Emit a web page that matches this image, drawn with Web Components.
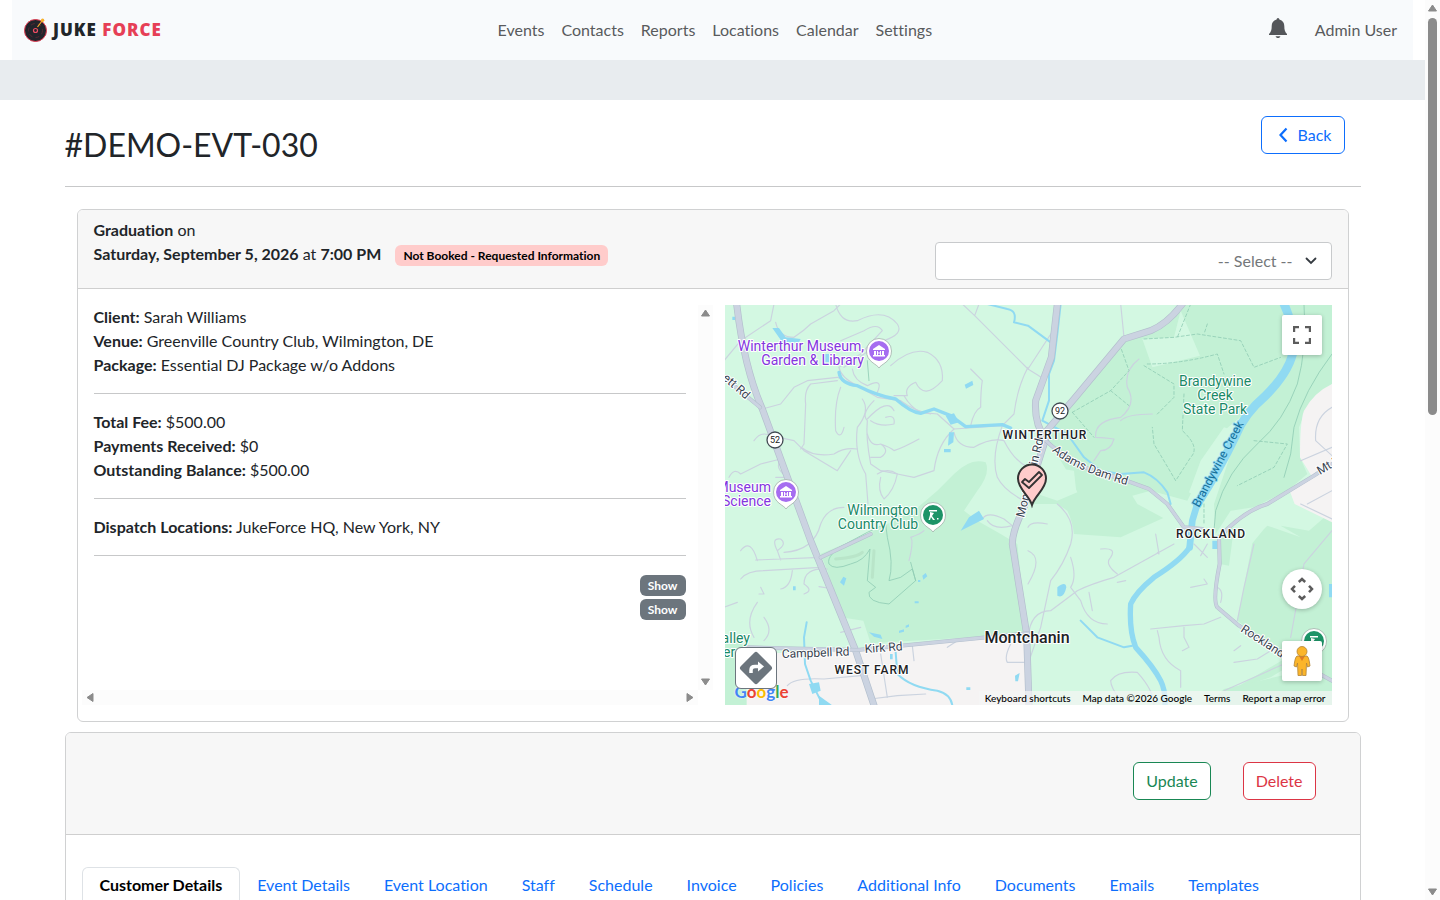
<!DOCTYPE html>
<html lang="en">
<head>
<meta charset="utf-8">
<meta name="viewport" content="width=device-width, initial-scale=1">
<title>#DEMO-EVT-030 - Juke Force</title>
<style>
html, body { margin: 0; height: 100%; overflow: hidden; }
body { font: 16px/24px Lato, sans-serif; font-variant-ligatures: none; color: #212529; background: #fff; }
hr { border: 0; border-top: 1px solid #c7c8c9; margin: 16px 0; }
b { font-weight: 700; }
</style>
</head>
<body>
<app-shell>
  <app-header>
    <nav-link href="#events">Events</nav-link>
    <nav-link href="#contacts">Contacts</nav-link>
    <nav-link href="#reports">Reports</nav-link>
    <nav-link href="#locations">Locations</nav-link>
    <nav-link href="#calendar">Calendar</nav-link>
    <nav-link href="#settings">Settings</nav-link>
    <nav-link slot="user" href="#account">Admin User</nav-link>
  </app-header>
  <page-container>
    <page-title>#DEMO-EVT-030
      <outline-button slot="action" tone="primary" icon="back">Back</outline-button>
    </page-title>
    <event-summary>
      <div slot="heading"><b>Graduation</b> on</div>
      <div slot="heading"><b>Saturday, September 5, 2026</b> at <b>7:00 PM</b> <status-badge tone="pink">Not Booked - Requested Information</status-badge></div>
      <div><b>Client:</b> Sarah Williams</div>
      <div><b>Venue:</b> Greenville Country Club, Wilmington, DE</div>
      <div><b>Package:</b> Essential DJ Package w/o Addons</div>
      <hr>
      <div><b>Total Fee:</b> $500.00</div>
      <div><b>Payments Received:</b> $0</div>
      <div><b>Outstanding Balance:</b> $500.00</div>
      <hr>
      <div><b>Dispatch Locations:</b> JukeForce HQ, New York, NY</div>
      <hr>
      <show-row>Show</show-row>
      <show-row>Show</show-row>
      <event-map slot="map"></event-map>
    </event-summary>
    <event-editor>
      <outline-button slot="actions" tone="success">Update</outline-button>
      <outline-button slot="actions" tone="danger">Delete</outline-button>
      <tab-link href="#customer" active>Customer Details</tab-link>
      <tab-link href="#event">Event Details</tab-link>
      <tab-link href="#location">Event Location</tab-link>
      <tab-link href="#staff">Staff</tab-link>
      <tab-link href="#schedule">Schedule</tab-link>
      <tab-link href="#invoice">Invoice</tab-link>
      <tab-link href="#policies">Policies</tab-link>
      <tab-link href="#additional">Additional Info</tab-link>
      <tab-link href="#documents">Documents</tab-link>
      <tab-link href="#emails">Emails</tab-link>
      <tab-link href="#templates">Templates</tab-link>
    </event-editor>
  </page-container>
</app-shell>

<script>
const define = (name, html) => customElements.define(name, class extends HTMLElement {
  constructor() {
    super();
    const markup = typeof html === 'function' ? html(this) : html;
    this.attachShadow({ mode: 'open' }).innerHTML = markup;
  }
});

/* Scroll track with end arrows; the thumb shows when the attribute is set. */
define('scroll-rail', el => {
  const across = el.hasAttribute('horizontal');
  const arrow = r => `<svg width="15" height="15" viewBox="0 0 15 15" aria-hidden="true"><path transform="rotate(${r} 7.5 7.5)" d="M7.5 5 L11.5 11 H3.5 Z" fill="#8b8b8b" stroke="#8b8b8b" stroke-linejoin="round"/></svg>`;
  return `<style>
    :host { display: flex; flex-direction: ${across ? 'row' : 'column'}; justify-content: space-between; background: #fcfcfc; ${across ? 'height' : 'width'}: 15px; }
    svg { display: block; flex: none; }
    .track { flex: 1; padding: 3px; box-sizing: border-box; }
    .thumb { width: 9px; height: 46%; border-radius: 5px; background: #8b8b8b; }
  </style>${arrow(across ? -90 : 0)}<div class="track">${el.hasAttribute('thumb') ? '<div class="thumb"></div>' : ''}</div>${arrow(across ? 90 : 180)}`;
});

define('app-shell', `<style>
  :host { display: grid; grid-template-columns: minmax(0, 1fr) auto; height: 100vh; }
  main { overflow: hidden; min-width: 0; }
</style><main><slot></slot></main><scroll-rail thumb></scroll-rail>`);

define('nav-link', el => `<style>
  :host { display: block; }
  a { color: #595b5d; text-decoration: none; white-space: nowrap; }
</style><a href="${el.getAttribute('href')}"><slot></slot></a>`);

define('app-header', `<style>
  :host { display: block; border-bottom: 40px solid #e8ecef; }
  header { display: flex; align-items: center; justify-content: space-between; height: 60px; margin: 0 12px; padding: 0 16px 0 12px; box-sizing: border-box; background: #f8fafc; }
  .brand { display: flex; align-items: center; gap: 5px; color: #212529; font-family: "Noto Sans", sans-serif; font-size: 17px; font-weight: 900; letter-spacing: 1px; text-decoration: none; }
  .brand em { font-style: normal; color: #e63f56; }
  nav, .user { display: flex; align-items: center; gap: 17px; }
  .user { gap: 27px; }
  button { border: 0; padding: 0; background: none; display: flex; }
</style>
<header>
  <a class="brand" href="#home">
    <svg width="24" height="24" viewBox="0 0 24 24" aria-hidden="true">
      <circle cx="11.5" cy="12.5" r="11" fill="#22242b" stroke="#e23a50"/>
      <circle cx="11.5" cy="12.5" r="7" fill="none" stroke="#6b2936" stroke-width=".7" stroke-dasharray="4 3"/>
      <circle cx="11.5" cy="12.5" r="2" fill="#22242b" stroke="#ed4c62" stroke-width="1.2"/>
      <path d="M13.5 9 L18 3" stroke="#f4a72b" stroke-width="1.2"/><circle cx="18.6" cy="2.3" r="1.7" fill="#f7b02d"/>
    </svg>
    <span>JUKE <em>FORCE</em></span>
  </a>
  <nav aria-label="Main"><slot></slot></nav>
  <div class="user">
    <button type="button" aria-label="Notifications"><svg width="20" height="24" viewBox="0 0 20 24">
      <path d="M10 0 C9 0 8.800 1 8.600 1.600 C5.200 2.400 3.700 5 3.700 8 C3.700 12 3 13.800 1 16 V17 H19 V16 C17 13.800 16.300 12 16.300 8 C16.300 5 14.800 2.400 11.400 1.600 C11.200 1 11 0 10 0 Z" fill="#54565a"/>
      <path d="M7.600 18.300 H12.400 C12 20.700 8 20.700 7.600 18.300 Z" fill="#54565a"/></svg></button>
    <slot name="user"></slot>
  </div>
</header>`);

define('page-container', `<style>
  :host { display: block; box-sizing: border-box; max-width: 1320px; margin: 0 auto; padding: 0 12px; }
</style><slot></slot>`);

define('page-title', `<style>
  :host { display: flex; justify-content: space-between; align-items: flex-start; box-sizing: border-box; height: 87px; padding: 16px 16px 0 0; border-bottom: 1px solid #c7c8c9; }
  h1 { margin: 8px 0 0; font-size: 32px; line-height: 42px; font-weight: 400; }
</style><h1><slot></slot></h1><slot name="action"></slot>`);

define('outline-button', el => {
  const tone = { primary: '#0d6efd', success: '#198754', danger: '#dc3545' }[el.getAttribute('tone')];
  const icon = el.getAttribute('icon') === 'back'
    ? '<svg width="18" height="16" viewBox="0 0 18 16" aria-hidden="true"><path d="M12.500 1.500 L6.500 8 L12.500 14.500" fill="none" stroke="currentColor" stroke-width="2.200"/></svg>' : '';
  return `<style>
    :host { display: block; flex: none; }
    button { display: flex; align-items: center; gap: 6px; padding: 6px 12px; border: 1px solid ${tone}; border-radius: 6px; background: #fff; color: ${tone}; font: inherit; }
  </style><button type="button">${icon}<span><slot></slot></span></button>`;
});

define('status-badge', el => {
  const pink = el.getAttribute('tone') === 'pink';
  return `<style>
    :host { display: inline-block; padding: 4px 8px; border-radius: 6px; font-size: 12px; line-height: 13px; font-weight: 700; vertical-align: baseline;
      ${pink ? 'background: #ffcccb; color: #000; margin-left: 10px;' : 'background: #6c757d; color: #fff;'} }
  </style><slot></slot>`;
});

define('show-row', `<style>
  :host { display: flex; justify-content: flex-end; align-items: flex-end; height: 24px; }
  button { border: 0; padding: 0; background: none; font: inherit; }
  status-badge { display: block; }
</style><button type="button"><status-badge><slot></slot></status-badge></button>`);

define('event-summary', `<style>
  :host { display: block; margin: 22px 12px 10px; border: 1px solid #d0d1d2; border-radius: 6px; overflow: hidden; }
  .head { display: flex; justify-content: space-between; padding: 8px 16px; background: #f7f7f7; border-bottom: 1px solid #cfcfcf; }
  .title { white-space: nowrap; }
  .picker { position: relative; width: 32%; margin-top: 24px; box-sizing: border-box; }
  select { appearance: none; display: block; width: 100%; height: 38px; padding: 0 38px 0 12px; border: 1px solid #c8cacc; border-radius: 4px; background: #fff; color: #74777a; font: inherit; text-align: right; text-align-last: right; }
  .picker svg { position: absolute; right: 15px; top: 13px; pointer-events: none; }
  .body { display: grid; grid-template-columns: 1fr 1fr; padding: 16px 4px; }
  .details { display: grid; grid-template-columns: minmax(0, 1fr) auto; grid-template-rows: minmax(0, 1fr) auto; height: 400px; }
  .text { padding: 0 12px; }
  .map { padding: 0 12px; }
</style>
<div class="head">
  <div class="title"><slot name="heading"></slot></div>
  <div class="picker"><select aria-label="Event status"><option>-- Select --</option></select>
    <svg width="12" height="12" viewBox="0 0 12 12" aria-hidden="true"><path d="M1.500 3.500 L6 8 L10.500 3.500" fill="none" stroke="#343a40" stroke-width="1.800" stroke-linecap="round"/></svg></div>
</div>
<div class="body">
  <div class="details"><div class="text"><slot></slot></div><scroll-rail></scroll-rail><scroll-rail horizontal></scroll-rail></div>
  <div class="map"><slot name="map"></slot></div>
</div>`);

define('event-editor', `<style>
  :host { display: block; border: 1px solid #d0d1d2; border-radius: 6px 6px 0 0; overflow: hidden; }
  .head { display: flex; justify-content: flex-end; gap: 32px; padding: 29px 44px 34px; background: #f7f7f7; border-bottom: 1px solid #cfcfcf; }
  nav { display: flex; padding: 32px 16px 0; }
</style>
<div class="head"><slot name="actions"></slot></div>
<nav aria-label="Event sections"><slot></slot></nav>`);

define('tab-link', el => `<style>
  :host { display: block; }
  a { display: block; padding: 5px 16px 8px; border: 1px solid transparent; border-bottom: 0; border-radius: 6px 6px 0 0; color: #0d6efd; text-decoration: none; white-space: nowrap; }
  :host([active]) a { padding: 5px 17px 8px; border-color: #dee2e6; color: #000; font-weight: 700; }
</style><a href="${el.getAttribute('href')}"><slot></slot></a>`);

const poi = (x, y, fill, glyph) => `<g transform="translate(${x} ${y})"><path d="M0 17 C-2 13 -12.500 11 -12.500 0 A12.500 12.500 0 0 1 12.500 0 C12.500 11 2 13 0 17 Z" fill="#fff" stroke="#9fb0a8" stroke-width=".8"/><circle r="10" fill="${fill}"/>${glyph}</g>`;
const museum = '<path d="M-6 -2 L0 -6 L6 -2 V-1 H-6 Z M-5 0 H-3 V4 H-5 Z M3 0 H5 V4 H3 Z M-6 4 H6 V5.500 H-6 Z M-2 0 H-1 V1.500 H1 V0 H2 V4 H1 V2.500 H-1 V4 H-2 Z" fill="#fff"/>';
const golf = '<path d="M-4 -5 H4 V-3.500 H-4 Z M-3 -3 L1 -2 L-1 1 L2 5 H0 L-2 2 L-3 5 H-4.500 L-3 0 Z M4 3 h1.500 v1.500 h-1.500 Z" fill="#fff"/>';
const route = (x, y, n) => `<circle cx="${x}" cy="${y}" r="8" fill="#fff" stroke="#414a52" stroke-width="1.300"/><text x="${x}" y="${y + 3}" text-anchor="middle" font-size="9" fill="#222">${n}</text>`;

define('event-map', `<style>
  :host { display: block; position: relative; height: 400px; overflow: hidden; background: #d3f8e2; }
  .canvas { display: block; width: 100%; height: 100%; }
  text { font-family: Roboto, sans-serif; paint-order: stroke; stroke: #fff; stroke-width: 2px; stroke-linejoin: round; }
  .tools { position: absolute; right: 10px; top: 10px; bottom: 24px; display: flex; flex-direction: column; gap: 32px; }
  .tools button:first-child { margin-bottom: auto; }
  button { display: flex; align-items: center; justify-content: center; width: 40px; height: 40px; padding: 0; border: 0; border-radius: 2px; background: #fff; box-shadow: 0 1px 4px rgba(0,0,0,.25); }
  .round { border-radius: 50%; }
  .directions { position: absolute; left: 10px; bottom: 16px; width: 42px; height: 42px; border: 1px solid #6c757d; border-radius: 6px; box-shadow: none; }
  .google { position: absolute; left: 10px; bottom: 1px; font: 700 17px/24px Lato, sans-serif; text-decoration: none; text-shadow: 0 0 2px #fff; }
  .credits { position: absolute; right: 0; bottom: 0; display: flex; height: 14px; background: rgba(245,245,245,.7); font-size: 10px; line-height: 14px; font-weight: 500; }
  .credits a, .credits span { padding: 0 6px; color: #000; text-decoration: none; white-space: nowrap; }
</style>
<svg class="canvas" viewBox="0 0 607 400" preserveAspectRatio="xMidYMid slice" role="img" aria-label="Map of the venue">
 <g transform="scale(.33333) translate(-3 -3)" fill="none" stroke-linecap="round" stroke-linejoin="round">
  <rect width="1830" height="1210" fill="#d3f8e2"/>
  <g fill="#c3f1d5">
   <path d="M1375 0 L1290 85 L1200 110 L1060 270 L975 360 L968 400 L1040 520 L1060 565 L1000 590 L912 560 L912 600 L1000 600 L1030 620 Q1045 650 1050 690 L1190 700 L1318 642 L1240 600 L1225 575 L1280 560 L1390 590 L1430 510 L1500 380 L1560 330 L1470 600 L1475 690 L1520 620 L1590 610 L1690 560 L1750 510 L1728 460 L1725 370 L1760 290 L1824 240 V0 Z"/>
   <path d="M1620 675 L1630 665 L1730 700 L1670 665 L1755 680 L1824 620 V1100 L1740 1060 L1640 1120 L1520 1160 L1690 1060 L1540 950 L1585 718 Z"/>
   <path d="M1490 680 L1530 670 L1515 785 L1488 780 Z M1824 1080 V1204 H1450 L1500 1155 Z"/>
   <path d="M290 750 L430 690 L570 620 L640 560 L690 510 Q740 460 785 475 Q800 510 760 560 L720 620 L760 650 L830 690 L880 720 L908 990 L440 1018 L418 950 L350 940 L310 800 Z"/>
   <path d="M0 1000 H55 L70 1204 H0 Z"/>
  </g>
  <g fill="#d3f8e2">
   <path d="M1255 105 L1350 100 L1370 20 L1428 155 L1285 190 Z"/>
   <path d="M1395 565 L1430 470 L1500 370 L1530 380 L1450 600 Z M920 480 L1050 500 L1057 565 L915 560 Z"/>
  </g>
  <g fill="#f5f3f3">
   <path d="M68 1050 L400 1040 L910 990 L918 1204 H68 Z"/>
   <path d="M1824 240 Q1770 265 1740 320 Q1728 350 1728 460 L1765 520 L1695 555 L1712 600 L1824 655 Z"/>
  </g>
  <g stroke="#cbd3df" stroke-width="3.500">
   <path d="M150 0 L140 50 L50 110 L0 170 M155 55 Q165 100 210 100 Q240 80 260 60 L330 20 L350 0 M335 0 Q350 60 400 50 Q480 10 520 60 Q540 90 480 110 L360 190 M350 110 L420 80 Q460 55 475 80 L410 150 L345 190"/>
   <path d="M715 0 L752 35 L912 195 M752 35 L765 0 M115 315 L170 300 L210 250 L250 230 L340 220 L400 245 M340 230 L260 240 Q240 260 245 300 L240 420 L230 435 M350 250 Q330 300 335 380 Q350 410 360 370"/>
   <path d="M500 185 Q560 130 610 145 Q660 170 655 230 Q600 290 575 235 Q540 250 550 275 L510 275 M540 275 Q560 310 590 325 L640 330 L690 375 L835 365 M740 365 Q750 320 770 310 Q770 260 775 230 L740 195"/>
   <path d="M345 190 Q350 220 400 245 L460 280 L530 290 Q570 320 620 330 M385 195 Q390 230 430 245 Q480 220 460 265 M415 285 Q440 320 400 370 Q390 450 425 510 L432 600 M450 290 Q410 330 430 350 Q425 400 440 480 L470 500 L520 510 L570 520 L630 500 Q640 420 690 375"/>
   <path d="M430 345 Q490 280 510 320 M440 350 Q470 370 510 360 Q515 330 485 340 M430 390 Q440 430 470 420 Q500 440 470 460 L440 460 M470 420 Q500 430 510 440 Q540 430 585 405 M460 510 Q490 490 520 510 Q510 560 480 585 Q460 560 470 520"/>
   <path d="M90 410 Q110 380 140 395 L210 410 L240 440 L340 500 L380 440 M235 432 Q270 460 330 450 Q360 430 400 435 M15 520 Q30 490 50 510 L110 480 L170 465 M170 470 Q150 490 190 520 L155 520"/>
   <path d="M912 190 Q880 250 870 330 L835 365 Q800 460 820 520 Q840 560 900 590 M690 385 Q700 430 750 430 Q800 400 840 410 Q870 470 912 490"/>
   <path d="M95 768 L290 760 M50 740 Q80 700 100 770 M160 740 Q140 700 170 705 Q190 720 160 740 L170 768 M180 745 Q270 740 290 660 Q310 610 360 610 M50 825 Q70 800 120 800 L290 790 M205 800 Q200 850 170 855 M310 795 Q240 790 240 840 Q270 860 240 870 M285 848 L330 855 M110 850 L120 870 L105 870 M0 910 L40 895 M100 895 Q60 950 90 1000 M120 940 Q150 980 120 1010 M350 985 L410 970"/>
   <path d="M555 770 Q570 710 560 700 Q590 690 600 680 M775 645 Q790 620 840 645 L865 665 M790 650 Q810 680 865 665"/>
   <path d="M1200 100 L1190 0 M912 195 L960 225 M1245 165 Q1200 200 1210 250 Q1240 300 1190 340 Q1110 350 1115 400 Q1140 400 1170 405 Q1160 440 1130 440 L1110 470 M1285 330 Q1210 330 1190 350 M912 195 L1000 60"/>
   <path d="M1000 600 Q1060 650 1040 720 Q1020 780 980 830 L950 970 L912 1080 M912 670 Q920 650 970 660 M912 840 Q960 760 912 740 M912 1000 Q920 920 980 920 L1060 860 Q1100 840 1170 820 L1350 720 M1180 810 Q1140 780 1160 760 Q1180 730 1130 735 M1295 690 L1305 750 L1300 745 M1180 835 L1205 830 M1040 760 Q1060 820 1040 850 L1070 890 Q1090 960 1150 960 M1095 865 L1105 920"/>
   <path d="M1280 975 L1380 965 L1440 960 L1490 940 M1300 980 L1305 1000 Q1310 1070 1370 1100 L1370 1150 M1380 970 L1380 1000 L1395 1030 L1375 1040 M1590 720 L1560 850 L1540 950 M1824 680 L1740 780 L1700 1000 M1160 1130 Q1180 1100 1240 1105 Q1290 1160 1290 1204 M1160 1130 Q1160 1150 1190 1190 M1530 1075 L1600 1065 L1640 1040 M1530 1040 L1550 1025 M1500 1160 L1680 1080 M1400 850 L1450 840 L1440 825 M1480 850 Q1500 860 1490 895 M1410 720 L1450 760 M1450 720 L1430 755"/>
   <path d="M1824 310 Q1770 340 1775 410 L1824 455 M1730 470 L1824 430 M1730 600 L1824 645 M1750 600 L1824 560"/>
   <path d="M190 1145 Q210 1120 300 1125 L410 1115 M440 1185 L520 1175 L605 1170 M470 1050 L490 1180 M860 1020 Q840 1060 850 1075 L905 1075 M670 1030 L700 1010 M565 1025 L570 1070"/>
  </g>
  <g stroke="#90cdb4" stroke-width="2.500">
   <path d="M290 760 L430 685 L485 660 L490 700 Q510 780 495 830 L530 820 L565 795 L575 830 L495 900 Q430 895 435 865 L455 850 L430 830 L438 735 Q420 770 380 780 Q330 800 315 780 Q310 765 325 750 M560 775 L575 830 M430 170 L435 230"/>
   <g stroke-dasharray="9 7"><path d="M1260 105 L1350 100 L1420 90 L1550 110 L1590 190 L1670 160 M1400 0 L1360 100 M1450 60 L1440 90 M1270 180 Q1370 180 1480 150 L1500 210 M1260 185 L1350 240 L1350 280 L1300 330 M1380 270 L1375 380 Q1430 430 1400 460 L1355 530 L1290 420 L1285 370 M1045 325 L1160 260 L1215 200 L1190 130 M1160 260 L1215 305 M1045 325 L1110 400 M1590 410 L1690 420 L1650 490 L1540 545 M1440 600 L1440 660"/></g>
   <path d="M1740 0 Q1750 130 1720 240 Q1680 350 1600 420 Q1510 500 1475 620 L1470 680 M1824 150 Q1740 260 1710 370 L1700 450 L1680 520"/>
  </g>
  <g stroke="#b9e5c9" stroke-width="9"><path d="M335 765 Q400 760 415 745 M450 740 L445 820"/></g>
  <g stroke="#90daf2">
   <path stroke-width="26" d="M1680 0 Q1710 60 1706 150 Q1690 210 1625 275 Q1560 330 1535 395 Q1490 490 1420 600"/>
   <path stroke-width="20" d="M1420 600 L1405 650 L1397 730"/>
   <path stroke-width="16" d="M1397 730 Q1370 770 1290 820 Q1235 865 1220 900 Q1215 980 1235 1030 Q1290 1090 1310 1130 Q1325 1160 1323 1204"/>
   <path stroke-width="10" d="M345 205 Q350 240 400 245 Q460 275 515 285 Q560 325 590 328 L630 315 L680 335 L725 368 L835 362 L860 372"/>
   <path stroke-width="6" d="M790 0 L850 15 Q880 20 870 55 L912 65 L980 115 M1010 0 L1000 90 L990 170 L975 210 L975 290 L955 350 L1030 390 L1080 460 L1130 500 L1190 510 L1260 505 Q1300 520 1330 565 L1340 600 M1345 620 L1375 660 M1070 950 L1120 1000 L1200 1030 L1225 1025 M248 955 L240 1000 L243 1080 L260 1130 L290 1190 M515 1045 L520 1110 Q560 1150 640 1160 Q680 1170 685 1204"/>
  </g>
  <g fill="#90daf2"><path d="M145 72 L165 72 L185 100 L230 105 L225 115 L175 115 Z M665 335 L690 328 L705 355 L680 362 Z M675 385 L690 385 L688 415 L672 425 Z M660 435 h20 v10 h-20 Z M722 242 L745 230 L748 243 L726 254 Z M300 150 l15 0 l0 25 l-15 0 Z M25 38 h8 v10 h-8 Z M710 680 L735 640 L765 620 L780 645 L740 665 Z M348 835 L358 818 L367 823 L360 845 Z M595 815 l10 -8 l5 10 l-12 10 Z M582 828 h7 v6 h-7 Z M572 892 h12 v6 h-12 Z M207 847 h8 v12 h-8 Z M435 985 L470 992 L475 1005 L450 998 Z M525 980 l15 -4 v7 l-15 4 Z M545 965 l10 -4 v7 l-10 4 Z M498 1050 h8 v16 h-8 Z M255 1140 L285 1135 L290 1160 L265 1170 Z M285 1175 L325 1204 H285 Z M1000 850 Q1025 830 1027 850 Q1020 885 1000 875 Z M1465 710 h16 v25 h-16 Z M1815 840 h10 v40 h-10 Z M873 1115 l14 -8 l-5 25 l-8 0 Z M727 1150 h12 v8 h-12 Z"/></g>
  <g stroke="#b3bfcd" stroke-width="21"><path d="M38 0 Q60 190 115 315 L260 710 L395 1040 L450 1204 M1000 0 L982 160 L935 290 Q930 360 965 405 L900 610 Q865 680 865 720 L908 990 L915 1204 M1375 0 Q1330 60 1280 80 L1200 105 L1050 285 L960 390"/></g>
  <g stroke="#cbd3e1" stroke-width="17"><path d="M38 0 Q60 190 115 315 L260 710 L395 1040 L450 1204 M1000 0 L982 160 L935 290 Q930 360 965 405 L900 610 Q865 680 865 720 L908 990 L915 1204 M1375 0 Q1330 60 1280 80 L1200 105 L1050 285 L960 390"/></g>
  <g stroke="#b3bfcd" stroke-width="12"><path d="M960 405 Q1060 500 1180 520 L1275 555 L1330 600 L1380 670 L1435 675 M70 1030 L400 1038 L912 988 M0 220 L108 310 M290 760 L440 690 M1485 700 L1487 780 Q1465 890 1480 910 L1545 965 L1680 1050 L1824 1130 M1485 700 Q1560 620 1630 600 L1770 515 L1824 480"/></g>
  <g stroke="#cbd3e1" stroke-width="9"><path d="M960 405 Q1060 500 1180 520 L1275 555 L1330 600 L1380 670 L1435 675 M70 1030 L400 1038 L912 988 M0 220 L108 310 M290 760 L440 690 M1485 700 L1487 780 Q1465 890 1480 910 L1545 965 L1680 1050 L1824 1130 M1485 700 Q1560 620 1630 600 L1770 515 L1824 480"/></g>
 </g>
 <g font-size="14" fill="#8435de" text-anchor="end"><text x="139" y="46">Winterthur Museum,</text><text x="139" y="60">Garden &amp; Library</text><text x="46" y="187">Museum</text><text x="46" y="201">Science</text></g>
 <g font-size="14" fill="#198a67"><g text-anchor="middle"><text x="490" y="81">Brandywine</text><text x="490" y="95">Creek</text><text x="490" y="109">State Park</text></g><g text-anchor="end"><text x="193" y="210">Wilmington</text><text x="193" y="224">Country Club</text><text x="25" y="338">Valley</text></g><text x="-2" y="352">er</text></g>
 <g font-size="12" font-weight="500" fill="#202124" letter-spacing="1" text-anchor="middle"><text x="320" y="134">WINTERTHUR</text><text x="486" y="233">ROCKLAND</text><text x="147" y="369">WEST FARM</text></g>
 <g font-size="12" fill="#38434f"><text transform="translate(-3 74) rotate(41)">ett Rd</text><text transform="translate(57 353) rotate(-2)">Campbell Rd</text><text transform="translate(140 348) rotate(-4)">Kirk Rd</text><text transform="translate(515 326) rotate(33)">Rockland Rd</text><text transform="translate(595 170) rotate(-31)">Mt Lebanon</text><text transform="translate(299 213) rotate(-76)">Montchanin Rd</text><path id="adams" d="M327 146 Q347 165 402 180" fill="none"/><text><textPath href="#adams">Adams Dam Rd</textPath></text></g>
 <text transform="translate(474 203) rotate(-62)" font-size="12" fill="#14709b" style="stroke:#90daf2">Brandywine Creek</text>
 <text x="302" y="338" text-anchor="middle" font-size="16" font-weight="500" fill="#202124">Montchanin</text>
 ${route(50, 135, 52)}${route(335, 106, 92)}
 ${poi(154, 46, '#a66df0', museum)}${poi(61, 187, '#a66df0', museum)}${poi(208, 210, '#1d9367', golf)}${poi(589, 336, '#1d9367', golf)}
 <path d="M307 200 C304 190 293 184 293 173.500 A14 14 0 0 1 321 173.500 C321 184 310 190 307 200 Z" fill="#ffcccb" stroke="#333" stroke-width="2"/>
 <path d="M297 177 L300 174 L304 177 L314 167 L317 170 L304 183 Z" fill="#ffcccb" stroke="#333" stroke-width="1.800" stroke-linejoin="round"/>
</svg>
<a class="google" href="#google"><span style="color:#4285f4">G</span><span style="color:#ea4335">o</span><span style="color:#fbbc05">o</span><span style="color:#4285f4">g</span><span style="color:#34a853">l</span><span style="color:#ea4335">e</span></a>
<button class="directions" type="button" aria-label="Directions"><svg width="34" height="34" viewBox="0 0 34 34"><path d="M17 3.500 L30.500 17 L17 30.500 L3.500 17 Z" fill="#6c757d" stroke="#6c757d" stroke-width="5" stroke-linejoin="round"/><path d="M12 22 V19 Q12 15.500 16 15.500 H21" fill="none" stroke="#fff" stroke-width="3.500"/><path d="M19 10.500 L25 15.500 L19 20.500 Z" fill="#fff"/></svg></button>
<div class="tools">
 <button type="button" aria-label="Full screen"><svg width="18" height="18" viewBox="0 0 18 18" fill="none" stroke="#5c5c5c" stroke-width="2.200"><path d="M1.100 6 V1.100 H6 M12 1.100 H16.900 V6 M16.900 12 V16.900 H12 M6 16.900 H1.100 V12"/></svg></button>
 <button class="round" type="button" aria-label="Pan"><svg width="24" height="24" viewBox="0 0 24 24" fill="none" stroke="#5c5c5c" stroke-width="2.500"><path d="M8.800 5 L12 2 L15.200 5 M8.800 19 L12 22 L15.200 19 M5 8.800 L2 12 L5 15.200 M19 8.800 L22 12 L19 15.200"/></svg></button>
 <button type="button" aria-label="Street View"><svg width="20" height="32" viewBox="0 0 20 32"><path d="M5 11 H15 Q17 12 18 21 L15.500 22 L14.500 18 L14 30.500 H10.500 L10 24 L9.500 30.500 H6 L5.500 18 L4.500 22 L2 21 Q3 12 5 11 Z" fill="#fbb52a" stroke="#b18437" stroke-width=".8"/><path d="M7 11 L10 16 L13 11 Z" fill="#e07b22"/><circle cx="10" cy="6.500" r="5" fill="#fbb52a" stroke="#b18437" stroke-width=".8"/></svg></button>
</div>
<div class="credits"><a href="#keys">Keyboard shortcuts</a><span>Map data ©2026 Google</span><a href="#terms">Terms</a><a href="#report">Report a map error</a></div>`);
</script>
</body>
</html>
